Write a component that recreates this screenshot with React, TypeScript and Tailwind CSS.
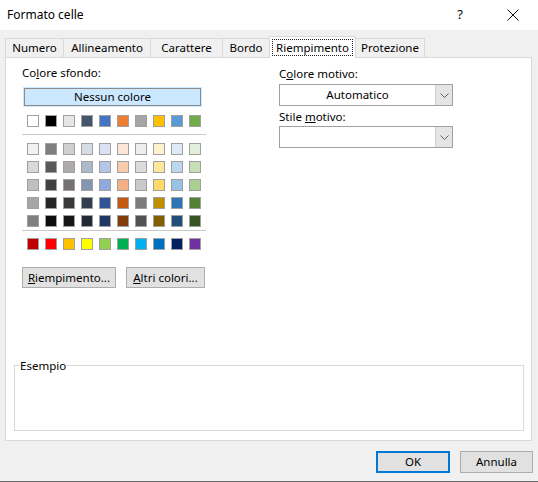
import React from 'react';

const themeRow = ['#FFFFFF', '#000000', '#E7E6E6', '#44546A', '#4472C4', '#ED7D31', '#A5A5A5', '#FFC000', '#5B9BD5', '#70AD47'];

const shadeRows = [
  ['#F2F2F2', '#7F7F7F', '#D0CECE', '#D6DCE4', '#D9E1F2', '#FCE4D6', '#EDEDED', '#FFF2CC', '#DDEBF7', '#E2EFDA'],
  ['#D9D9D9', '#595959', '#AEAAAA', '#ACB9CA', '#B4C6E7', '#F8CBAD', '#DBDBDB', '#FFE699', '#BDD7EE', '#C6E0B4'],
  ['#BFBFBF', '#404040', '#757171', '#8497B0', '#8EA9DB', '#F4B084', '#C9C9C9', '#FFD966', '#9BC2E6', '#A9D08E'],
  ['#A6A6A6', '#262626', '#3A3838', '#333F4F', '#305496', '#C65911', '#7B7B7B', '#BF8F00', '#2F75B5', '#548235'],
  ['#808080', '#0D0D0D', '#161616', '#222B35', '#203764', '#833C0C', '#525252', '#806000', '#1F4E78', '#375623'],
];

const standardRow = ['#C00000', '#FF0000', '#FFC000', '#FFFF00', '#92D050', '#00B050', '#00B0F0', '#0070C0', '#002060', '#7030A0'];

// tab widths measured from the dialog
const tabs = [
  { label: 'Numero', w: 'w-[59px]' },
  { label: 'Allineamento', w: 'w-[88px]' },
  { label: 'Carattere', w: 'w-[73px]' },
  { label: 'Bordo', w: 'w-[48px]' },
  { label: 'Riempimento', w: 'w-[87px]' },
  { label: 'Protezione', w: 'w-[70px]' },
];

function SwatchRow({ colors }: { colors: string[] }) {
  return (
    <div className="flex gap-[6px] pl-[5px]">
      {colors.map((c, i) => (
        <div key={i} className="w-[12px] h-[12px] border border-[#a0a0a0]" style={{ backgroundColor: c }} />
      ))}
    </div>
  );
}

function Chevron() {
  return (
    <svg width="9" height="5" viewBox="0 0 9 5" fill="none">
      <path d="M0.5 0.5 L4.5 4.5 L8.5 0.5" stroke="#606060" strokeWidth="1" />
    </svg>
  );
}

function Select({ value }: { value?: string }) {
  return (
    <div className="flex w-[174px] h-[22px] border border-[#a0a0a0] bg-white">
      <div className="flex-1 flex items-center justify-center text-black">{value}</div>
      <div className="w-[17px] flex items-center justify-center bg-[#e5e5e5] border-l border-[#cfcfcf]">
        <Chevron />
      </div>
    </div>
  );
}

export default function App() {
  return (
    <div className="w-[538px] h-[482px] bg-[#f0f0f0] flex flex-col text-[11.5px] text-black [font-family:'Noto_Sans',sans-serif] overflow-hidden">
      {/* title bar */}
      <div className="h-[30px] bg-white flex items-center pl-[7px] shrink-0 text-[12px]">
        <span>Formato celle</span>
        <span className="ml-auto mr-[44px] text-[13px]">?</span>
        <svg width="12" height="12" viewBox="0 0 12 12" className="mr-[19px]">
          <path d="M0.5 0.5 L11.5 11.5 M11.5 0.5 L0.5 11.5" stroke="#111" strokeWidth="1" />
        </svg>
      </div>

      {/* tabs */}
      <div className="flex items-end pl-[5px] h-[27px] shrink-0 relative z-10">
        {tabs.map((t, i) => {
          const active = t.label === 'Riempimento';
          return active ? (
            <div key={t.label} className={`${t.w} -ml-px h-[22px] -mb-px bg-white border border-b-0 border-[#d9d9d9] flex items-center justify-center`}>
              <span className="px-[3px] leading-[15px] outline outline-1 outline-dotted outline-[#222]">{t.label}</span>
            </div>
          ) : (
            <div key={t.label} className={`${t.w} ${i === 0 ? '' : '-ml-px'} h-[19px] bg-[#f0f0f0] border border-b-0 border-[#d9d9d9] flex items-center justify-center`}>
              {t.label}
            </div>
          );
        })}
      </div>

      {/* panel */}
      <div className="ml-[5px] mr-[6px] h-[384px] shrink-0 bg-white border border-[#d9d9d9] flex flex-col">
        <div className="flex pt-[8px]">
          {/* left column */}
          <div className="ml-[16px] w-[184px] flex flex-col">
            <div className="h-[14px] leading-[14px]">
              Co<span className="underline">l</span>ore sfondo:
            </div>
            <div className="mt-[7px] ml-px w-[179px] h-[20px] bg-[#cce8ff] p-px">
              <div className="h-full border border-[#8c8c8c] flex items-center justify-center">Nessun colore</div>
            </div>
            <div className="mt-[8px]">
              <SwatchRow colors={themeRow} />
            </div>
            <div className="mt-[7px] h-px bg-[#c8c8c8]" />
            <div className="mt-[8px] flex flex-col gap-[6px]">
              {shadeRows.map((r, i) => (
                <SwatchRow key={i} colors={r} />
              ))}
            </div>
            <div className="mt-[3px] h-px bg-[#c8c8c8]" />
            <div className="mt-[7px]">
              <SwatchRow colors={standardRow} />
            </div>
            <div className="mt-[17px] flex gap-[10px]">
              <div className="w-[94px] h-[21px] bg-[#e1e1e1] border border-[#adadad] flex items-center justify-center">
                <span><span className="underline">R</span>iempimento...</span>
              </div>
              <div className="w-[79px] h-[21px] bg-[#e1e1e1] border border-[#adadad] flex items-center justify-center">
                <span><span className="underline">A</span>ltri colori...</span>
              </div>
            </div>
          </div>

          {/* right column */}
          <div className="ml-[73px] flex flex-col">
            <div className="h-[14px] leading-[14px] mt-px">
              C<span className="underline">o</span>lore motivo:
            </div>
            <div className="mt-[3px]">
              <Select value="Automatico" />
            </div>
            <div className="mt-[4px] h-[14px] leading-[14px]">
              Stile <span className="underline">m</span>otivo:
            </div>
            <div className="mt-[2px]">
              <Select />
            </div>
          </div>
        </div>

        <div className="flex-1" />

        <fieldset className="ml-[8px] mr-[7px] mb-[9px] h-[70px] border border-[#d9d9d9] px-[5px]">
          <legend className="leading-[9px] px-0">Esempio</legend>
        </fieldset>
      </div>

      {/* buttons */}
      <div className="flex justify-end gap-[10px] pr-[5px] mt-[10px]">
        <div className="w-[74px] h-[22px] bg-[#e1e1e1] border-2 border-[#0078d7] flex items-center justify-center">OK</div>
        <div className="w-[73px] h-[22px] bg-[#e1e1e1] border border-[#adadad] flex items-center justify-center">Annulla</div>
      </div>

      <div className="flex-1" />
      <div className="h-px bg-[#6b6b6b] shrink-0" />
    </div>
  );
}
